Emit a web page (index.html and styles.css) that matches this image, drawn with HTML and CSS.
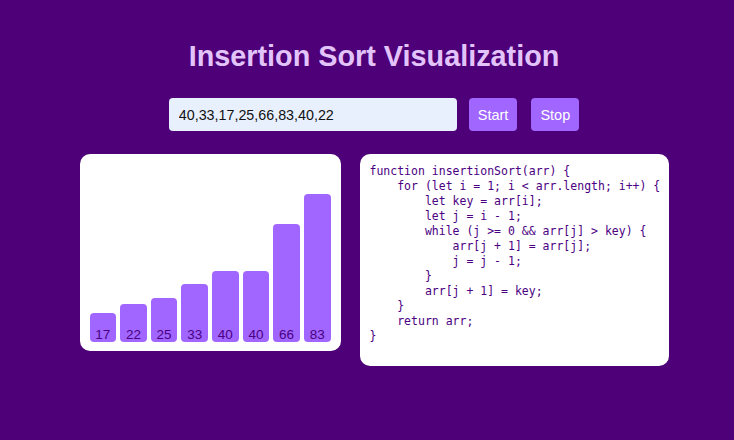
FILE: index.html
```html
<!DOCTYPE html>
<html>
<head>
<meta charset="utf-8">
<link rel="stylesheet" href="styles.css">
</head>
<body>
<div class="app">
  <h1 class="title">Insertion Sort Visualization</h1>
  <div class="controls">
    <input class="array-input" type="text" value="40,33,17,25,66,83,40,22">
    <button class="btn">Start</button>
    <button class="btn btn-stop">Stop</button>
  </div>
  <div class="panels">
    <div class="card chart">
      <div class="bar" style="height:29px">17</div>
      <div class="bar" style="height:38px">22</div>
      <div class="bar" style="height:44px">25</div>
      <div class="bar" style="height:58px">33</div>
      <div class="bar" style="height:71px">40</div>
      <div class="bar" style="height:71px">40</div>
      <div class="bar" style="height:118px">66</div>
      <div class="bar" style="height:148px">83</div>
    </div>
    <div class="card code-card">
<pre class="code">function insertionSort(arr) {
    for (let i = 1; i &lt; arr.length; i++) {
        let key = arr[i];
        let j = i - 1;
        while (j &gt;= 0 &amp;&amp; arr[j] &gt; key) {
            arr[j + 1] = arr[j];
            j = j - 1;
        }
        arr[j + 1] = key;
    }
    return arr;
}</pre>
    </div>
  </div>
</div>
</body>
</html>
```

FILE: styles.css
```css
html, body {
  height: 100%;
}
body {
  margin: 0;
  padding: 0 0 0 14px;
  background: #4e0078;
  font-family: "Liberation Sans", Arial, sans-serif;
  box-sizing: border-box;
}
.app {
  display: flex;
  flex-direction: column;
  align-items: center;
}
.title {
  margin: 40px 0 0;
  font-size: 28.8px;
  line-height: 33px;
  font-weight: bold;
  color: #e3c4fa;
}
.controls {
  display: flex;
  margin-top: 25px;
}
.array-input {
  width: 288px;
  height: 33px;
  box-sizing: border-box;
  border: none;
  border-radius: 4px;
  background: #e8f0fe;
  padding: 0 10px;
  font-family: "Liberation Sans", Arial, sans-serif;
  font-size: 14.3px;
  color: #111;
  outline: none;
}
.btn {
  height: 33px;
  margin-left: 12px;
  padding: 0 9px;
  border: none;
  border-radius: 4px;
  background: #a066ff;
  color: #fff;
  font-family: "Liberation Sans", Arial, sans-serif;
  font-size: 14.5px;
}
.btn-stop {
  margin-left: 14px;
}
.panels {
  display: flex;
  align-items: flex-start;
  gap: 19px;
  margin-top: 23px;
}
.card {
  background: #fff;
  border-radius: 10px;
  box-sizing: border-box;
}
.chart {
  width: 261px;
  height: 197px;
  padding: 0 10px 9px;
  display: flex;
  align-items: flex-end;
  gap: 4px;
}
.bar {
  flex: 1;
  background: #a066ff;
  border-radius: 4px;
  display: flex;
  align-items: flex-end;
  justify-content: center;
  color: #4b0082;
  font-size: 13.5px;
  line-height: 14px;
}
.code-card {
  width: 309px;
  padding: 10px 10px 22px;
}
.code {
  margin: 0;
  font-family: "DejaVu Sans Mono", "Liberation Mono", monospace;
  font-size: 11.5px;
  line-height: 15px;
  color: #4b0082;
}
```
